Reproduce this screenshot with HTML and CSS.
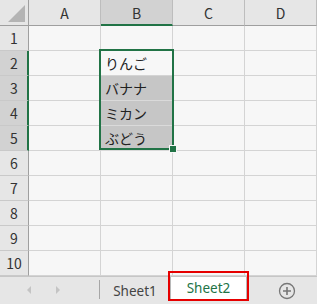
FILE: index.html
```html
<!DOCTYPE html>
<html lang="ja">
<head>
<meta charset="utf-8">
<link rel="stylesheet" href="styles.css">
</head>
<body>
<div class="app">
  <div class="sheet">
    <div class="corner"><span class="tri"></span></div>
    <div class="ch">A</div>
    <div class="ch sel">B</div>
    <div class="ch">C</div>
    <div class="ch">D</div>

    <div class="rh">1</div><div class="c"></div><div class="c"></div><div class="c"></div><div class="c"></div>
    <div class="rh sel">2</div><div class="c"></div><div class="c t">りんご</div><div class="c"></div><div class="c"></div>
    <div class="rh sel">3</div><div class="c"></div><div class="c t hl">バナナ</div><div class="c"></div><div class="c"></div>
    <div class="rh sel">4</div><div class="c"></div><div class="c t hl">ミカン</div><div class="c"></div><div class="c"></div>
    <div class="rh sel">5</div><div class="c"></div><div class="c t hl">ぶどう</div><div class="c"></div><div class="c"></div>
    <div class="rh">6</div><div class="c"></div><div class="c"></div><div class="c"></div><div class="c"></div>
    <div class="rh">7</div><div class="c"></div><div class="c"></div><div class="c"></div><div class="c"></div>
    <div class="rh">8</div><div class="c"></div><div class="c"></div><div class="c"></div><div class="c"></div>
    <div class="rh">9</div><div class="c"></div><div class="c"></div><div class="c"></div><div class="c"></div>
    <div class="rh">10</div><div class="c"></div><div class="c"></div><div class="c"></div><div class="c"></div>

    <div class="selection"><span class="handle"></span></div>
  </div>
  <div class="tabs">
    <div class="nav">
      <svg width="8" height="10" viewBox="0 0 8 10"><path d="M6 1 L2 5 L6 9 Z" fill="#c4c4c4"/></svg>
      <svg width="8" height="10" viewBox="0 0 8 10"><path d="M2 1 L6 5 L2 9 Z" fill="#c4c4c4"/></svg>
    </div>
    <div class="tab">Sheet1</div>
    <div class="tab active">Sheet2<span class="mark"></span></div>
    <div class="add">
      <svg width="18" height="18" viewBox="0 0 18 18"><circle cx="9" cy="9" r="7.5" fill="none" stroke="#777" stroke-width="1.3"/><path d="M9 5 V13 M5 9 H13" stroke="#777" stroke-width="1.6"/></svg>
    </div>
  </div>
</div>
</body>
</html>
```

FILE: styles.css
```css
html, body {
  margin: 0;
  padding: 0;
  background: #f7f7f7;
}
.app {
  width: 317px;
  height: 304px;
  font-family: "Noto Sans CJK JP", "Noto Sans", sans-serif;
  font-size: 14px;
  color: #222;
  display: flex;
  flex-direction: column;
  overflow: hidden;
}
.sheet {
  position: relative;
  display: grid;
  grid-template-columns: 29px 72px 72px 72px 72px;
  grid-template-rows: 26px repeat(10, 25px);
  background: #f7f7f7;
}
.sheet > div {
  box-sizing: border-box;
  border-right: 1px solid #d4d4d4;
  border-bottom: 1px solid #d4d4d4;
}
.corner {
  background: #e6e6e6;
  position: relative;
  border-right-color: #9f9f9f !important;
  border-bottom-color: #9f9f9f !important;
}
.tri {
  position: absolute;
  right: 3px;
  bottom: 3px;
  width: 0;
  height: 0;
  border-left: 17px solid transparent;
  border-bottom: 17px solid #b4b4b4;
}
.ch {
  background: #e6e6e6;
  border-right-color: #bdbdbd !important;
  border-bottom-color: #9f9f9f !important;
  display: flex;
  align-items: center;
  justify-content: center;
  color: #333;
  line-height: 1;
}
.ch.sel {
  background: #d2d2d2;
  border-bottom: 2px solid #217346 !important;
  padding-top: 1px;
}
.rh {
  background: #e6e6e6;
  border-right-color: #9f9f9f !important;
  border-bottom-color: #c9c9c9 !important;
  display: flex;
  align-items: center;
  justify-content: center;
  color: #333;
  line-height: 1;
}
.rh.sel {
  background: #d2d2d2;
  border-right: 2px solid #217346 !important;
  padding-left: 1px;
}
.c {
  background: #f7f7f7;
}
.t {
  display: flex;
  align-items: center;
  padding-left: 4px;
  line-height: 1;
  color: #222;
}
.c.hl {
  background: #c6c6c6;
  border-bottom-color: #dadada;
}
.sheet > .selection {
  position: absolute;
  left: 99px;
  top: 49px;
  width: 75px;
  height: 101px;
  border: 2px solid #217346;
  box-sizing: border-box;
}
.handle {
  position: absolute;
  right: -5px;
  bottom: -5px;
  width: 6px;
  height: 6px;
  background: #217346;
  border: 1px solid #f7f7f7;
}
.tabs {
  flex: 1;
  display: flex;
  align-items: stretch;
  background: #e6e6e6;
  border-top: 1px solid #c6c6c6;
  position: relative;
}
.nav {
  width: 100px;
  display: flex;
  align-items: center;
  justify-content: center;
  gap: 21px;
  padding-right: 12px;
  box-sizing: border-box;
  border-right: 1px solid #a6a6a6;
  margin: 3px 0 5px;
}
.tab {
  font-family: "Noto Sans", "DejaVu Sans", sans-serif;
  font-size: 13.5px;
  color: #444;
  display: flex;
  align-items: center;
  justify-content: center;
  width: 70px;
}
.tab.active {
  width: 77px;
  background: #fff;
  color: #217346;
  border-left: 1px solid #b8b8b8;
  border-right: 1px solid #b8b8b8;
  border-bottom: 2px solid #217346;
  margin-bottom: 3px;
  box-sizing: border-box;
  position: relative;
}
.mark {
  position: absolute;
  left: -3px;
  right: -3px;
  top: -6px;
  bottom: -2px;
  border: 2px solid #e60000;
}
.add {
  flex: 1;
  display: flex;
  align-items: center;
  justify-content: center;
  padding-left: 9px;
}
.add svg {
  display: block;
}
```
